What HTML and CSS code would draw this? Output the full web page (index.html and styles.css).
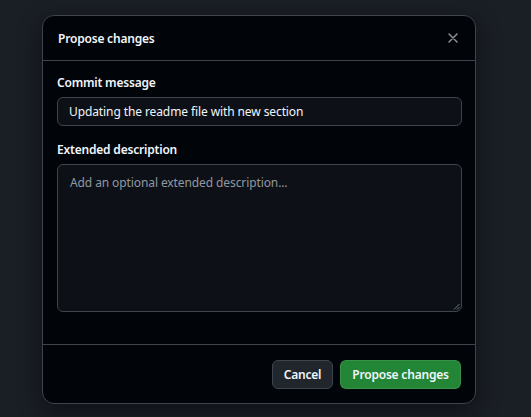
FILE: index.html
```
<!DOCTYPE html>
<html lang="en">
<head>
<meta charset="utf-8">
<title>Propose changes</title>
<link rel="stylesheet" href="styles.css">
</head>
<body>
<div class="dialog">
  <div class="dialog-header">
    <h2 class="dialog-title">Propose changes</h2>
    <button class="close-btn" aria-label="Close">
      <svg width="10" height="10" viewBox="0 0 10 10"><path d="M1 1L9 9M9 1L1 9" stroke="#9198a1" stroke-width="1.4" stroke-linecap="round"/></svg>
    </button>
  </div>
  <div class="dialog-body">
    <label class="field-label">Commit message</label>
    <div class="text-input">Updating the readme file with new section</div>
    <label class="field-label second">Extended description</label>
    <div class="text-area">
      <span class="placeholder">Add an optional extended description...</span>
      <svg class="resize" width="7" height="7" viewBox="0 0 7 7"><path d="M6.5 1L1 6.5M6.5 4L4 6.5" stroke="#6e7681" stroke-width="1"/></svg>
    </div>
  </div>
  <div class="dialog-footer">
    <button class="btn btn-cancel">Cancel</button>
    <button class="btn btn-primary">Propose changes</button>
  </div>
</div>
</body>
</html>
```
FILE: styles.css
```
html, body {
  margin: 0;
  padding: 0;
}
body {
  background: #1a1e25;
  font-family: "Noto Sans", "Open Sans", sans-serif;
  color: #f0f6fc;
  width: 531px;
  height: 417px;
  overflow: hidden;
}
.dialog {
  box-sizing: border-box;
  margin: 15px 0 0 42px;
  width: 434px;
  height: 389px;
  background: #010409;
  border: 1px solid #3d444d;
  border-radius: 12px;
  box-shadow: 0 8px 24px rgba(1, 4, 9, 0.45);
  display: flex;
  flex-direction: column;
}
.dialog-header {
  height: 44px;
  padding: 0 14px 0 15px;
  display: flex;
  align-items: center;
  justify-content: space-between;
  border-bottom: 1px solid #3d444d;
}
.dialog-title {
  margin: 0;
  font-size: 12px;
  font-weight: 600;
  letter-spacing: -0.2px;
}
.close-btn {
  background: none;
  border: 0;
  padding: 0;
  width: 28px;
  height: 28px;
  display: flex;
  align-items: center;
  justify-content: center;
  margin-right: -6px;
}
.dialog-body {
  padding: 12px 13px 0 14px;
  height: 271px;
  border-bottom: 1px solid #3d444d;
  display: flex;
  flex-direction: column;
}
.field-label {
  font-size: 12px;
  font-weight: 600;
  line-height: 20px;
  letter-spacing: -0.2px;
  margin-bottom: 4px;
}
.field-label.second {
  margin-top: 14px;
}
.text-input {
  box-sizing: border-box;
  height: 29px;
  border: 1px solid #3d444d;
  border-radius: 6px;
  background: #0d1117;
  padding: 0 11px;
  font-size: 12px;
  line-height: 27px;
  letter-spacing: -0.1px;
}
.text-area {
  position: relative;
  box-sizing: border-box;
  height: 148px;
  border: 1px solid #3d444d;
  border-radius: 6px;
  background: #0d1117;
  padding: 8px 12px;
  font-size: 12px;
  line-height: 20px;
  letter-spacing: -0.1px;
}
.placeholder {
  color: #9198a1;
}
.resize {
  position: absolute;
  right: 1px;
  bottom: 1px;
}
.dialog-footer {
  flex: 1;
  display: flex;
  justify-content: flex-end;
  align-items: flex-start;
  gap: 7px;
  padding: 15px 14px 0 14px;
}
.btn {
  box-sizing: border-box;
  height: 29px;
  border-radius: 6px;
  font-family: inherit;
  font-size: 12px;
  font-weight: 600;
  letter-spacing: -0.2px;
  color: #f0f6fc;
  padding: 0;
  white-space: nowrap;
  cursor: pointer;
}
.btn-cancel {
  background: #21262d;
  border: 1px solid #3d444d;
  width: 61px;
}
.btn-primary {
  background: #238636;
  border: 1px solid rgba(240, 246, 252, 0.1);
  width: 121px;
}
```
